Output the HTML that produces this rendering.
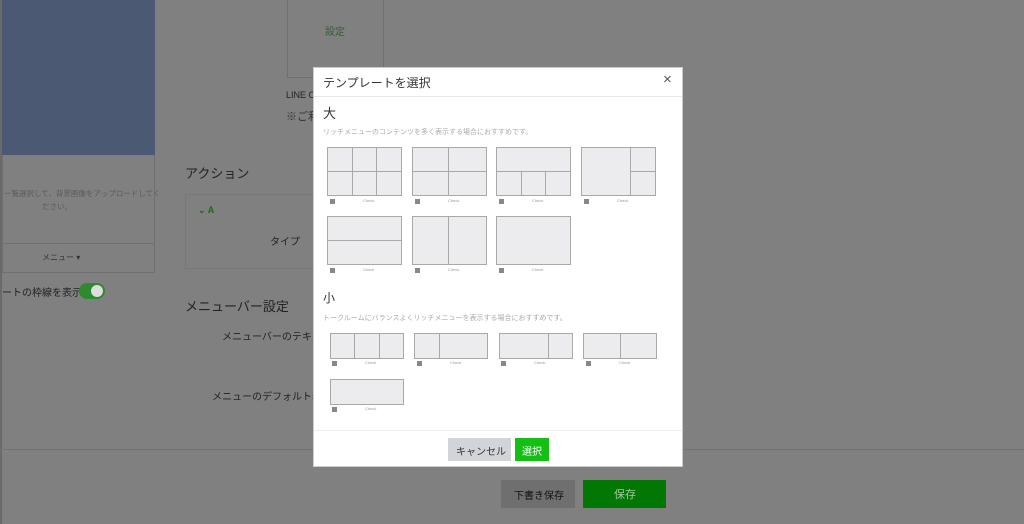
<!DOCTYPE html>
<html><head><meta charset="utf-8"><style>
*{margin:0;padding:0;box-sizing:border-box}
body{width:1024px;height:524px;background:#808080;position:relative;overflow:hidden;font-family:"Liberation Sans","Noto Sans CJK JP",sans-serif}
.a{position:absolute}
.t{position:absolute;white-space:nowrap}
.th{position:absolute;background:#ececee;border:1px solid #a9a9a9}
.l{position:absolute;background:#a9a9a9}
.ic{position:absolute;width:5px;height:5px;background:#888}
.ck{position:absolute;font-size:4px;color:#999}
</style></head><body>
<div class="a" style="left:0;top:0;width:2px;height:524px;background:#6a6a6a"></div>
<div class="a" style="left:2px;top:0;width:153px;height:155px;background:#4b5a72"></div>
<div class="a" style="left:2px;top:155px;width:153px;height:118px;border:1px solid #707070;border-top:none"></div>
<div class="a" style="left:2px;top:243px;width:153px;height:1px;background:#707070"></div>
<div class="t" style="left:4px;top:188px;font-size:7.5px;color:#5a5a5a">ー覧選択して、背景画像をアップロードしてく</div>
<div class="t" style="left:42px;top:201px;font-size:7.5px;color:#5a5a5a">ださい。</div>
<div class="t" style="left:42px;top:252px;font-size:8px;color:#333">メニュー ▾</div>
<div class="t" style="left:2px;top:284px;font-size:10px;color:#222">ートの枠線を表示</div>
<div class="a" style="left:79px;top:283px;width:26px;height:16px;border-radius:8px;background:#2e8a2e"></div>
<div class="a" style="left:91px;top:285px;width:12px;height:12px;border-radius:6px;background:#ddd"></div>
<div class="a" style="left:287px;top:0;width:97px;height:78px;border:1px solid #707070;border-top:none"></div>
<div class="t" style="left:325px;top:23px;font-size:10px;color:#3a5a3a">設定</div>
<div class="t" style="left:286px;top:90px;font-size:9px;color:#222">LINE C</div>
<div class="t" style="left:286px;top:108px;font-size:11px;color:#333">※ご利</div>
<div class="t" style="left:185px;top:163px;font-size:13px;color:#222">アクション</div>
<div class="a" style="left:185px;top:194px;width:140px;height:75px;border:1px solid #777"></div>
<div class="t" style="left:198px;top:205px;font-size:9px;color:#1a6a1a;font-weight:bold">⌄ A</div>
<div class="t" style="left:270px;top:233px;font-size:10px;color:#222">タイプ</div>
<div class="t" style="left:185px;top:296px;font-size:13px;color:#222">メニューバー設定</div>
<div class="t" style="left:222px;top:328px;font-size:10px;color:#222">メニューバーのテキス</div>
<div class="t" style="left:212px;top:388px;font-size:10px;color:#222">メニューのデフォルト表</div>
<div class="a" style="left:0;top:449px;width:1024px;height:1px;background:#737373"></div>
<div class="a" style="left:501px;top:480px;width:74px;height:28px;background:#6f6f6f"></div>
<div class="t" style="left:514px;top:487px;font-size:10px;color:#111">下書き保存</div>
<div class="a" style="left:583px;top:480px;width:83px;height:28px;background:#037703"></div>
<div class="t" style="left:614px;top:486px;font-size:11px;color:#9ec89e">保存</div>

<div class="a" style="left:313px;top:67px;width:370px;height:400px;background:#fff;border:1px solid #ccc">
<div class="a" style="left:0;top:28px;width:368px;height:1px;background:#e8e8e8"></div>
<div class="t" style="left:9px;top:6px;font-size:12px;color:#333">テンプレートを選択</div>
<div class="t" style="left:349px;top:3px;font-size:15px;color:#555">×</div>
<div class="t" style="left:9px;top:35px;font-size:13px;color:#333">大</div>
<div class="t" style="left:9px;top:59px;font-size:7px;color:#aaa">リッチメニューのコンテンツを多く表示する場合におすすめです。</div>
<div class="t" style="left:9px;top:221px;font-size:12px;color:#333">小</div>
<div class="t" style="left:9px;top:245px;font-size:7px;color:#aaa">トークルームにバランスよくリッチメニューを表示する場合におすすめです。</div>
<div class="a" style="left:0;top:362px;width:368px;height:1px;background:#eee"></div>
<div class="a" style="left:134px;top:370px;width:63px;height:23px;background:#d1d4d8"></div>
<div class="t" style="left:142px;top:375px;font-size:10px;color:#333">キャンセル</div>
<div class="a" style="left:201px;top:370px;width:34px;height:23px;background:#14c014"></div>
<div class="t" style="left:208px;top:375px;font-size:10px;color:#fff">選択</div>
</div>

<div class="th" style="left:327px;top:147px;width:75px;height:49px"></div><div class="l" style="left:352px;top:147px;width:1px;height:49px"></div><div class="l" style="left:376px;top:147px;width:1px;height:49px"></div><div class="l" style="left:327px;top:171px;width:75px;height:1px"></div>
<div class="th" style="left:412px;top:147px;width:75px;height:49px"></div><div class="l" style="left:448px;top:147px;width:1px;height:49px"></div><div class="l" style="left:412px;top:171px;width:75px;height:1px"></div>
<div class="th" style="left:496px;top:147px;width:75px;height:49px"></div><div class="l" style="left:496px;top:171px;width:75px;height:1px"></div><div class="l" style="left:521px;top:171px;width:1px;height:25px"></div><div class="l" style="left:545px;top:171px;width:1px;height:25px"></div>
<div class="th" style="left:581px;top:147px;width:75px;height:49px"></div><div class="l" style="left:630px;top:147px;width:1px;height:49px"></div><div class="l" style="left:630px;top:171px;width:26px;height:1px"></div>
<div class="th" style="left:327px;top:216px;width:75px;height:49px"></div><div class="l" style="left:327px;top:240px;width:75px;height:1px"></div>
<div class="th" style="left:412px;top:216px;width:75px;height:49px"></div><div class="l" style="left:448px;top:216px;width:1px;height:49px"></div>
<div class="th" style="left:496px;top:216px;width:75px;height:49px"></div>
<div class="th" style="left:330px;top:333px;width:74px;height:26px"></div><div class="l" style="left:354px;top:333px;width:1px;height:26px"></div><div class="l" style="left:379px;top:333px;width:1px;height:26px"></div>
<div class="th" style="left:414px;top:333px;width:74px;height:26px"></div><div class="l" style="left:439px;top:333px;width:1px;height:26px"></div>
<div class="th" style="left:499px;top:333px;width:74px;height:26px"></div><div class="l" style="left:548px;top:333px;width:1px;height:26px"></div>
<div class="th" style="left:583px;top:333px;width:74px;height:26px"></div><div class="l" style="left:620px;top:333px;width:1px;height:26px"></div>
<div class="th" style="left:330px;top:379px;width:74px;height:26px"></div>

<div class="ic" style="left:330px;top:199px"></div><div class="ck" style="left:363px;top:198px">Check</div>
<div class="ic" style="left:415px;top:199px"></div><div class="ck" style="left:448px;top:198px">Check</div>
<div class="ic" style="left:499px;top:199px"></div><div class="ck" style="left:532px;top:198px">Check</div>
<div class="ic" style="left:584px;top:199px"></div><div class="ck" style="left:617px;top:198px">Check</div>
<div class="ic" style="left:330px;top:268px"></div><div class="ck" style="left:363px;top:267px">Check</div>
<div class="ic" style="left:415px;top:268px"></div><div class="ck" style="left:448px;top:267px">Check</div>
<div class="ic" style="left:499px;top:268px"></div><div class="ck" style="left:532px;top:267px">Check</div>
<div class="ic" style="left:332px;top:361px"></div><div class="ck" style="left:365px;top:360px">Check</div>
<div class="ic" style="left:417px;top:361px"></div><div class="ck" style="left:450px;top:360px">Check</div>
<div class="ic" style="left:501px;top:361px"></div><div class="ck" style="left:534px;top:360px">Check</div>
<div class="ic" style="left:586px;top:361px"></div><div class="ck" style="left:619px;top:360px">Check</div>
<div class="ic" style="left:332px;top:407px"></div><div class="ck" style="left:365px;top:406px">Check</div>
</body></html>
